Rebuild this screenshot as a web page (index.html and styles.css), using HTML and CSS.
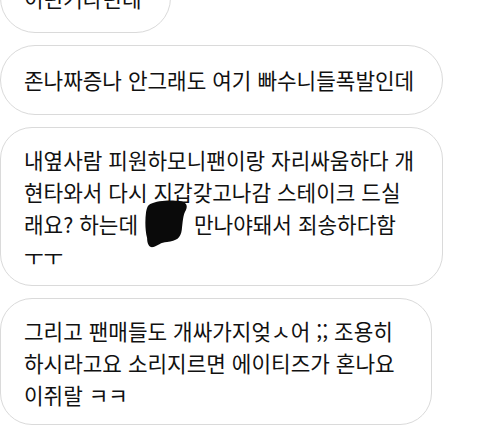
FILE: index.html
```html
<!DOCTYPE html>
<html lang="ko">
<head>
  <meta charset="UTF-8">
  <meta name="viewport" content="width=device-width, initial-scale=1.0">
  <title>DM</title>
  <link rel="stylesheet" href="styles.css">
</head>
<body>

  <div class="thread">
    <!-- cut off at the top -->
    <div class="bubble single">이런거라던데</div>

    <div class="bubble single">존나짜증나 안그래도 여기 빠수니들폭발인데</div>

    <div class="bubble">
      내옆사람 피원하모니팬이랑 자리싸움하다 개<br>
      현타와서 다시 지갑갖고나감 스테이크 드실<br>
      래요? 하는데 <span class="redact"><svg viewBox="0 0 40 48" width="42" height="48" preserveAspectRatio="none"><path d="M5 4 C12 0 26 0 33 1 C39 2 41 5 39 10 C36 15 36 22 35 30 C34 38 30 41 21 42 C15 42 12 46 8 47 C4 48 2 44 2 38 C0 30 0 20 1 12 C2 8 2 6 5 4 Z" fill="#0a0a0a"/></svg></span> 만나야돼서 죄송하다함<br>
      ㅜㅜ
    </div>

    <div class="bubble roomy">
      그리고 팬매들도 개싸가지엊ㅅ어 ;; 조용히<br>
      하시라고요 소리지르면 에이티즈가 혼나요<br>
      이쥐랄 ㅋㅋ
    </div>
  </div>

</body>
</html>
```

FILE: styles.css
```css
body {
  margin: 0;
  background: #fff;
  font-family: "Noto Sans CJK KR", "Noto Sans", sans-serif;
  color: #111;
  overflow: hidden;
}

.thread {
  display: flex;
  flex-direction: column;
  align-items: flex-start;
  gap: 12px;
  margin-top: -37px; /* first bubble is scrolled off */
}

.bubble {
  box-sizing: border-box;
  border: 1.5px solid #dadada;
  border-radius: 32px;
  padding: 16px 28px 13px 23px;
  font-size: 21.3px;
  line-height: 32px;
  white-space: nowrap;
}

.single {
  min-height: 70px;
  padding-top: 0;
  padding-bottom: 0;
  display: flex;
  align-items: center;
  border-radius: 35px;
}

.roomy {
  padding-right: 36px;
}

.redact {
  display: inline-block;
  width: 42px;
  height: 32px;
  vertical-align: top;
  margin: 0 1px;
}

.redact svg {
  display: block;
  margin-top: -8px;
}
```
